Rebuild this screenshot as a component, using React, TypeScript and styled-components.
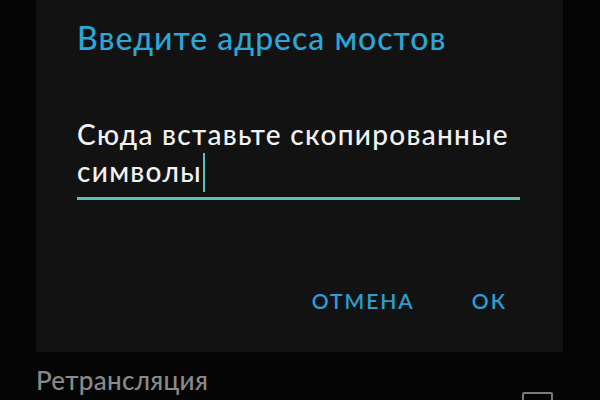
import React from "react";
import styled, { createGlobalStyle } from "styled-components";

const GlobalStyle = createGlobalStyle`
  html, body {
    margin: 0;
    padding: 0;
    background: #050505;
  }
  body {
    font-family: Lato, "Noto Sans", "Open Sans", sans-serif;
    overflow: hidden;
  }
`;

const Screen = styled.div`
  width: 600px;
  height: 400px;
  overflow: hidden;
  background: #050505;
  display: flex;
  flex-direction: column;
`;

const Dialog = styled.div`
  flex-shrink: 0;
  margin-left: 36px;
  width: 527px;
  height: 352px;
  box-sizing: border-box;
  background: #121212;
  padding: 22px 43px 0 41px;
  display: flex;
  flex-direction: column;
`;

const Title = styled.div`
  font-size: 32px;
  font-weight: 500;
  line-height: 32px;
  letter-spacing: 1px;
  color: #2ba6d6;
  white-space: nowrap;
`;

const Field = styled.div`
  margin-top: 62px;
  padding-bottom: 5px;
  border-bottom: 3px solid #5dc0b8;
  font-size: 28px;
  font-weight: 500;
  line-height: 37px;
  letter-spacing: 1.3px;
  color: #f2f2f2;
`;

const Cursor = styled.span`
  display: inline-block;
  width: 2px;
  height: 39px;
  margin-left: 1px;
  vertical-align: -10px;
  background: #5dc0b8;
`;

const Actions = styled.div`
  margin-top: 90px;
  display: flex;
  justify-content: flex-end;
  gap: 57px;
  padding-right: 13px;
`;

const ActionButton = styled.button`
  border: none;
  background: none;
  padding: 0;
  margin: 0;
  font-family: inherit;
  font-size: 21px;
  font-weight: 600;
  line-height: 21px;
  letter-spacing: 2px;
  color: #2a9fd0;
`;

const SettingRow = styled.div`
  flex-shrink: 0;
  margin-top: 15px;
  padding-left: 36px;
  padding-right: 47px;
  display: flex;
  align-items: flex-start;
  justify-content: space-between;
`;

const SettingLabel = styled.div`
  font-size: 26px;
  font-weight: 500;
  line-height: 26px;
  letter-spacing: 0.3px;
  color: #8a8a8a;
`;

const Checkbox = styled.div`
  flex-shrink: 0;
  margin-top: 25px;
  width: 31px;
  height: 31px;
  box-sizing: border-box;
  border: 2px solid #7a7a7a;
  border-radius: 2px;
`;

export default function App() {
  return (
    <>
      <GlobalStyle />
      <Screen>
        <Dialog>
          <Title>Введите адреса мостов</Title>
          <Field>
            Сюда вставьте скопированные символы
            <Cursor />
          </Field>
          <Actions>
            <ActionButton>ОТМЕНА</ActionButton>
            <ActionButton>ОК</ActionButton>
          </Actions>
        </Dialog>
        <SettingRow>
          <SettingLabel>Ретрансляция</SettingLabel>
          <Checkbox />
        </SettingRow>
      </Screen>
    </>
  );
}
